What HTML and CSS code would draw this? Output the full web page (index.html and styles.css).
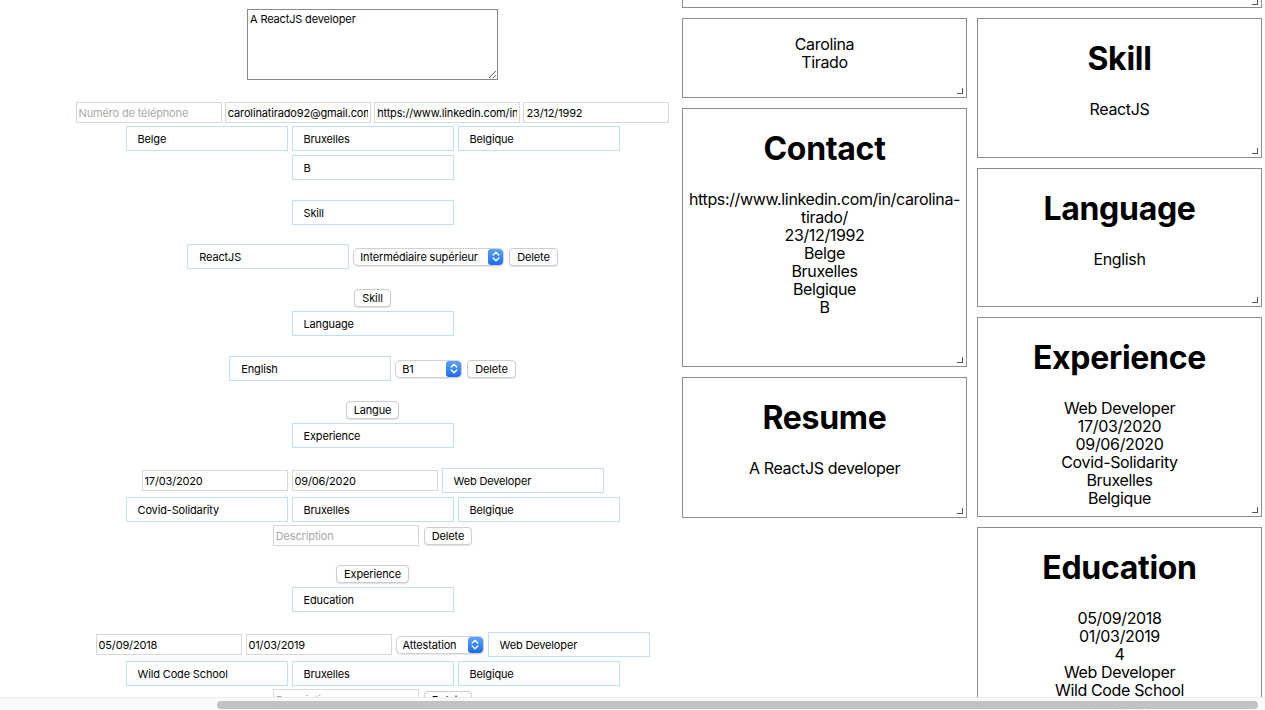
FILE: index.html
```html
<!DOCTYPE html>
<html lang="fr">
<head>
<meta charset="utf-8">
<title>CV Builder</title>
<link rel="stylesheet" href="styles.css">
</head>
<body>
<div class="page">
  <form class="editor">
    <textarea class="resume-input">A ReactJS developer</textarea>

    <div class="row mt-22 contact-row">
      <input class="field-gray" placeholder="Numéro de téléphone">
      <input class="field-gray" value="carolinatirado92@gmail.com">
      <input class="field-gray" value="https://www.linkedin.com/in/carolina-tirado/">
      <input class="field-gray" value="23/12/1992">
    </div>
    <div class="row mt-3">
      <input class="field" value="Belge">
      <input class="field" value="Bruxelles">
      <input class="field" value="Belgique">
    </div>
    <div class="row mt-4">
      <input class="field" value="B">
    </div>

    <input class="field mt-20" value="Skill">
    <div class="row mt-19">
      <input class="field" value="ReactJS">
      <span class="select w-151"><select><option>Intermédiaire supérieur</option></select><span class="arrows"><svg viewBox="0 0 14 15" width="14" height="15"><path d="M4.2 6 L7 3.3 L9.8 6 M4.2 9 L7 11.7 L9.8 9" /></svg></span></span>
      <button type="button" class="btn">Delete</button>
    </div>
    <button type="button" class="btn mt-20">Skill</button>

    <input class="field mt-4" value="Language">
    <div class="row mt-20">
      <input class="field" value="English">
      <span class="select w-67"><select><option>B1</option></select><span class="arrows"><svg viewBox="0 0 14 15" width="14" height="15"><path d="M4.2 6 L7 3.3 L9.8 6 M4.2 9 L7 11.7 L9.8 9" /></svg></span></span>
      <button type="button" class="btn">Delete</button>
    </div>
    <button type="button" class="btn mt-20">Langue</button>

    <input class="field mt-4" value="Experience">
    <div class="row mt-20">
      <input class="field-gray" value="17/03/2020">
      <input class="field-gray" value="09/06/2020">
      <input class="field" value="Web Developer">
    </div>
    <div class="row mt-4">
      <input class="field" value="Covid-Solidarity">
      <input class="field" value="Bruxelles">
      <input class="field" value="Belgique">
    </div>
    <div class="row mt-3">
      <input class="field-gray" placeholder="Description">
      <button type="button" class="btn">Delete</button>
    </div>
    <button type="button" class="btn mt-19">Experience</button>

    <input class="field mt-4" value="Education">
    <div class="row mt-20">
      <input class="field-gray" value="05/09/2018">
      <input class="field-gray" value="01/03/2019">
      <span class="select w-88"><select><option>Attestation</option></select><span class="arrows"><svg viewBox="0 0 14 15" width="14" height="15"><path d="M4.2 6 L7 3.3 L9.8 6 M4.2 9 L7 11.7 L9.8 9" /></svg></span></span>
      <input class="field" value="Web Developer">
    </div>
    <div class="row mt-4">
      <input class="field" value="Wild Code School">
      <input class="field" value="Bruxelles">
      <input class="field" value="Belgique">
    </div>
    <div class="row mt-3">
      <input class="field-gray" placeholder="Description">
      <button type="button" class="btn">Delete</button>
    </div>
  </form>

  <section class="preview">
    <div class="card card-top"></div>
    <div class="columns">
      <div class="column">
        <div class="card h-80"><p>Carolina<br>Tirado</p></div>
        <div class="card h-259">
          <h2>Contact</h2>
          <p>https://www.linkedin.com/in/carolina-tirado/<br>23/12/1992<br>Belge<br>Bruxelles<br>Belgique<br>B</p>
        </div>
        <div class="card h-141">
          <h2>Resume</h2>
          <p>A ReactJS developer</p>
        </div>
      </div>
      <div class="column">
        <div class="card h-140">
          <h2>Skill</h2>
          <p>ReactJS</p>
        </div>
        <div class="card h-139">
          <h2>Language</h2>
          <p>English</p>
        </div>
        <div class="card h-200">
          <h2>Experience</h2>
          <p>Web Developer<br>17/03/2020<br>09/06/2020<br>Covid-Solidarity<br>Bruxelles<br>Belgique</p>
        </div>
        <div class="card h-300">
          <h2>Education</h2>
          <p>05/09/2018<br>01/03/2019<br>4<br>Web Developer<br>Wild Code School<br>Bruxelles<br>Belgique</p>
        </div>
      </div>
    </div>
  </section>
</div>

<div class="hscroll"><div class="hscroll-thumb"></div></div>
</body>
</html>
```

FILE: styles.css
```css
* {
  box-sizing: border-box;
}

html, body {
  margin: 0;
  height: 100%;
  overflow: hidden;
  background: #fff;
}

body {
  font-family: Inter, "Noto Sans", sans-serif;
  color: #000;
}

.page {
  display: flex;
  align-items: flex-start;
}

/* ---------- left: editor ---------- */
.editor {
  width: 682px;
  flex: none;
  padding-left: 63px;
  display: flex;
  flex-direction: column;
  align-items: center;
}

.editor input,
.editor select,
.editor button,
.editor textarea {
  font-family: Inter, "Noto Sans", sans-serif;
  font-size: 11px;
  letter-spacing: -0.15px;
  color: #000;
  margin: 0;
}

.resume-input {
  margin-top: 9px !important;
  width: 251px;
  height: 71px;
  border: 1px solid #8a8a8a;
  padding: 3px 2px;
  line-height: 13px;
  resize: both;
  outline: none;
}

.row {
  display: flex;
  align-items: center;
  gap: 4px;
}

.contact-row {
  gap: 3.3px;
}

.field {
  width: 162px;
  height: 25px;
  border: 1px solid #bfe2f2;
  padding: 0 11px;
  background: #fff;
  outline: none;
}

.field-gray {
  width: 146px;
  height: 21px;
  border: 1px solid #d8d8d8;
  padding: 0 2px;
  background: #fff;
  outline: none;
}

.field-gray::placeholder {
  color: #a9a9a9;
}

.btn {
  height: 18px;
  padding: 0 7px;
  border: 1px solid #cdcdcd;
  border-radius: 4px;
  background: #fff;
  box-shadow: 0 1px 1px rgba(0, 0, 0, 0.12);
  line-height: 16px;
  cursor: default;
}

.row .btn {
  margin-left: 1px;
}

.select {
  display: inline-flex;
  align-items: stretch;
  height: 18px;
  border: 1px solid #d2d2d2;
  border-radius: 5px;
  background: #fff;
  box-shadow: 0 1px 1px rgba(0, 0, 0, 0.1);
  overflow: hidden;
}

.select select {
  appearance: none;
  -webkit-appearance: none;
  border: none;
  background: transparent;
  padding: 0 0 0 6px;
  flex: 1;
  min-width: 0;
  outline: none;
}

.select .arrows {
  width: 15px;
  flex: none;
  display: flex;
  align-items: center;
  justify-content: center;
  background: linear-gradient(#5ea3fa, #1c6cf0);
  border-radius: 3px;
}

.select .arrows path {
  fill: none;
  stroke: #fff;
  stroke-width: 1.4;
  stroke-linecap: round;
  stroke-linejoin: round;
}

.w-151 { width: 151px; }
.w-67 { width: 67px; }
.w-88 { width: 88px; }

.mt-3 { margin-top: 3px !important; }
.mt-4 { margin-top: 4px !important; }
.mt-19 { margin-top: 19px !important; }
.mt-20 { margin-top: 20px !important; }
.mt-22 { margin-top: 22px !important; }

/* ---------- right: preview ---------- */
.preview {
  width: 580px;
  flex: none;
  display: flex;
  flex-direction: column;
  gap: 10px;
}

.columns {
  display: flex;
  gap: 10px;
  align-items: flex-start;
}

.column {
  display: flex;
  flex-direction: column;
  gap: 10px;
}

.column:first-child { width: 285px; }
.column:last-child { width: 285px; }

.card {
  position: relative;
  border: 1px solid #8e8e8e;
  overflow: hidden;
  text-align: center;
  background: #fff;
}

.card::after {
  content: "";
  position: absolute;
  right: 3px;
  bottom: 3px;
  width: 5px;
  height: 5px;
  border-right: 1.5px solid #5a5a5a;
  border-bottom: 1.5px solid #5a5a5a;
}

.card-top {
  height: 8px;
  border-top: none;
}

.card-top::after {
  bottom: 2px;
}

.card h2 {
  margin: 21.44px 0;
  font-size: 32px;
  font-weight: 700;
  line-height: 38px;
  letter-spacing: -0.3px;
}

.card p {
  margin: 16px 0;
  font-size: 16px;
  line-height: 18px;
  letter-spacing: -0.35px;
}

.h-80 { height: 80px; }
.h-259 { height: 259px; }
.h-141 { height: 141px; }
.h-140 { height: 140px; }
.h-139 { height: 139px; }
.h-200 { height: 200px; }
.h-300 { height: 300px; }

/* ---------- overlay horizontal scrollbar ---------- */
.hscroll {
  position: fixed;
  left: 0;
  right: 0;
  bottom: 0;
  height: 13px;
  background: rgba(250, 250, 250, 0.97);
  border-top: 1px solid #ececec;
  padding-top: 3px;
}

.hscroll-thumb {
  margin-left: 217px;
  width: 1041px;
  height: 8px;
  border-radius: 4px;
  background: #c2c2c2;
}
```
